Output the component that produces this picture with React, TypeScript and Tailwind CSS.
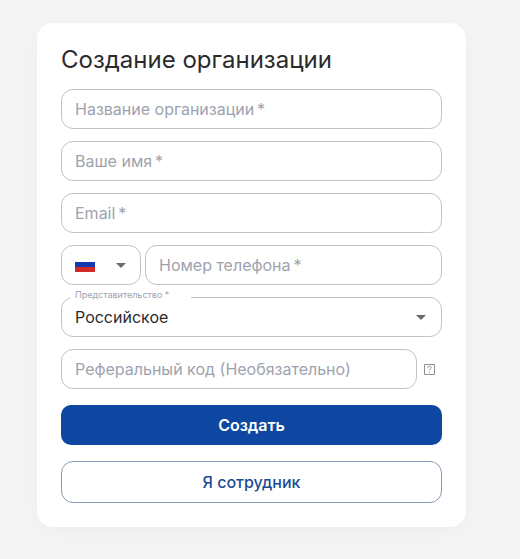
import { useId } from "react"

type FieldProps = {
  readonly label: string
  readonly type?: string
  readonly required?: boolean
}

const outline = "h-10 rounded-[12px] border border-[#c1c2c5] bg-white text-base text-[#2b2b2e] outline-none focus:border-[#0d47a1]"

const Field = ({ label, type = "text", required = false }: FieldProps) => (
  <input
    type={type}
    required={required}
    aria-label={label}
    placeholder={required ? `${label}\u2009*` : label}
    className={`${outline} w-full min-w-0 px-[13px] placeholder:text-[#9da3ae] placeholder:opacity-100`}
  />
)

const Caret = ({ className }: { readonly className: string }) => (
  <svg viewBox="0 0 10 5" className={`pointer-events-none absolute h-[5px] w-[10px] ${className}`} aria-hidden="true">
    <path d="M0 0h10L5 5z" fill="#6b6b6b" />
  </svg>
)

const RussianFlag = () => (
  <svg viewBox="0 0 20 14" className="pointer-events-none absolute top-[13px] left-[14px] h-[14px] w-5" aria-hidden="true">
    <path d="M0 0h20v4H0z" fill="#fff" />
    <path d="M0 4h20v5H0z" fill="#1438ad" />
    <path d="M0 9h20v5H0z" fill="#d22b26" />
  </svg>
)

const CountrySelect = () => (
  <div className="relative w-20 shrink-0">
    <select aria-label="Код страны" className={`${outline} block w-full appearance-none`}>
      <option value="RU" aria-label="Россия" />
    </select>
    <RussianFlag />
    <Caret className="top-[18px] right-[15px]" />
  </div>
)

const OfficeSelect = () => {
  const id = useId()
  return (
    <div className="relative">
      <label htmlFor={id} className="absolute -top-2 left-[9px] w-[121px] bg-white pl-[5px] text-[9px] leading-3 text-[#9da3ae]">
        Представительство *
      </label>
      <select id={id} required className={`${outline} block w-full appearance-none px-[13px]`}>
        <option>Российское</option>
      </select>
      <Caret className="top-[18px] right-4" />
    </div>
  )
}

const HelpIcon = () => (
  <svg viewBox="0 0 11 11" className="h-[11px] w-[11px]" fill="none" stroke="#8f8f8f" aria-hidden="true">
    <path d="M.5 .5h10v10H.5z" />
    <path d="M3.7 4.1V3.5c0-.8.8-1.3 1.8-1.3s1.8.5 1.8 1.3c0 1.2-1.8 1.3-1.8 2.8M5.5 7.6v1.2" />
  </svg>
)

export default function App() {
  return (
    <main className="min-h-screen bg-[#f5f5f5] pt-[23px] pr-[54px] pb-8 pl-[37px] font-['Inter','Liberation_Sans',sans-serif]">
      <form className="flex flex-col gap-3 rounded-[16px] bg-white p-6 shadow-[0_4px_24px_rgba(0,0,0,0.04)]" onSubmit={(e) => e.preventDefault()}>
        <h1 className="-mt-1 text-2xl leading-[34px] font-normal text-[#2b2b2e]">Создание организации</h1>
        <Field label="Название организации" required />
        <Field label="Ваше имя" required />
        <Field label="Email" type="email" required />
        <div className="flex gap-1">
          <CountrySelect />
          <Field label="Номер телефона" type="tel" required />
        </div>
        <OfficeSelect />
        <div className="flex items-center gap-[7px] pr-[7px]">
          <Field label="Реферальный код (Необязательно)" />
          <button type="button" aria-label="Подсказка" className="shrink-0">
            <HelpIcon />
          </button>
        </div>
        <div className="mt-1 flex flex-col gap-4">
          <button type="submit" className="h-10 rounded-[10px] bg-[#0d47a1] text-base font-semibold text-white">
            Создать
          </button>
          <button type="button" className="h-[42px] rounded-[12px] border border-[#8699b5] bg-white text-base font-medium text-[#1c4c94]">
            Я сотрудник
          </button>
        </div>
      </form>
    </main>
  )
}
